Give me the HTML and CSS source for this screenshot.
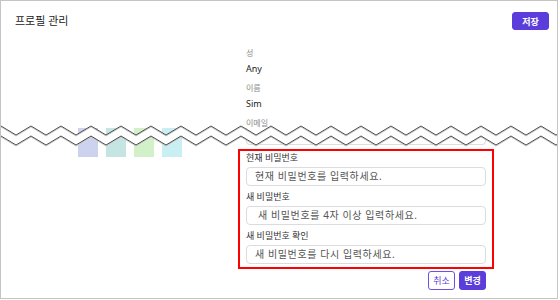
FILE: index.html
```html
<!DOCTYPE html>
<html lang="ko">
<head>
<meta charset="utf-8">
<title>프로필 관리</title>
<link rel="stylesheet" href="styles.css">
</head>
<body>
<div class="frame">
  <section class="top">
    <header class="header">
      <h1 class="title">프로필 관리</h1>
      <button class="btn btn-primary btn-save">저장</button>
    </header>
    <div class="fields">
      <div class="field">
        <div class="field-label">성</div>
        <div class="field-value">Any</div>
      </div>
      <div class="field">
        <div class="field-label">이름</div>
        <div class="field-value">Sim</div>
      </div>
      <div class="field">
        <div class="field-label">이메일</div>
      </div>
    </div>
  </section>

  <section class="bottom">
    <div class="swatches">
      <span class="swatch sw1"></span>
      <span class="swatch sw2"></span>
      <span class="swatch sw3"></span>
      <span class="swatch sw4"></span>
    </div>
    <div class="form-col">
      <div class="remnant"></div>
      <div class="highlight">
        <div class="pw-label">현재 비밀번호</div>
        <div class="pw-input">현재 비밀번호를 입력하세요.</div>
        <div class="pw-label">새 비밀번호</div>
        <div class="pw-input pw-input-wide">새 비밀번호를 4자 이상 입력하세요.</div>
        <div class="pw-label">새 비밀번호 확인</div>
        <div class="pw-input">새 비밀번호를 다시 입력하세요.</div>
      </div>
      <div class="actions">
        <button class="btn btn-outline">취소</button>
        <button class="btn btn-primary">변경</button>
      </div>
    </div>
  </section>

  <svg class="tear" width="560" height="24" viewBox="0 0 560 24" aria-hidden="true">
    <polygon fill="#ffffff" points="0,2 15,11 30,2 45,11 60,2 75,11 90,2 105,11 120,2 135,11 150,2 165,11 180,2 195,11 210,2 225,11 240,2 255,11 270,2 285,11 300,2 315,11 330,2 345,11 360,2 375,11 390,2 405,11 420,2 435,11 450,2 465,11 480,2 495,11 510,2 525,11 540,2 555,11 570,2 570,12 555,21 540,12 525,21 510,12 495,21 480,12 465,21 450,12 435,21 420,12 405,21 390,12 375,21 360,12 345,21 330,12 315,21 300,12 285,21 270,12 255,21 240,12 225,21 210,12 195,21 180,12 165,21 150,12 135,21 120,12 105,21 90,12 75,21 60,12 45,21 30,12 15,21 0,12"/>
    <g fill="none">
      <polyline stroke="#c8c8c8" stroke-width="1" transform="translate(0,1)" points="0,2 15,11 30,2 45,11 60,2 75,11 90,2 105,11 120,2 135,11 150,2 165,11 180,2 195,11 210,2 225,11 240,2 255,11 270,2 285,11 300,2 315,11 330,2 345,11 360,2 375,11 390,2 405,11 420,2 435,11 450,2 465,11 480,2 495,11 510,2 525,11 540,2 555,11 570,2"/>
      <polyline stroke="#c8c8c8" stroke-width="1" transform="translate(0,1)" points="0,12 15,21 30,12 45,21 60,12 75,21 90,12 105,21 120,12 135,21 150,12 165,21 180,12 195,21 210,12 225,21 240,12 255,21 270,12 285,21 300,12 315,21 330,12 345,21 360,12 375,21 390,12 405,21 420,12 435,21 450,12 465,21 480,12 495,21 510,12 525,21 540,12 555,21 570,12"/>
      <polyline stroke="#3a3a3a" stroke-width="0.9" points="0,2 15,11 30,2 45,11 60,2 75,11 90,2 105,11 120,2 135,11 150,2 165,11 180,2 195,11 210,2 225,11 240,2 255,11 270,2 285,11 300,2 315,11 330,2 345,11 360,2 375,11 390,2 405,11 420,2 435,11 450,2 465,11 480,2 495,11 510,2 525,11 540,2 555,11 570,2"/>
      <polyline stroke="#3a3a3a" stroke-width="0.9" points="0,12 15,21 30,12 45,21 60,12 75,21 90,12 105,21 120,12 135,21 150,12 165,21 180,12 195,21 210,12 225,21 240,12 255,21 270,12 285,21 300,12 315,21 330,12 345,21 360,12 375,21 390,12 405,21 420,12 435,21 450,12 465,21 480,12 495,21 510,12 525,21 540,12 555,21 570,12"/>
    </g>
  </svg>
</div>
</body>
</html>
```

FILE: styles.css
```css
* { box-sizing: border-box; }

html, body {
  margin: 0;
  padding: 0;
  background: #ffffff;
}

body {
  font-family: "Noto Sans", "Noto Sans CJK KR", sans-serif;
  color: #222222;
}

.frame {
  position: relative;
  width: 558px;
  height: 299px;
  border: 1px solid #c4c4c4;
  overflow: hidden;
  background: #ffffff;
}

.top {
  height: 127px;
  overflow: hidden;
}

.header {
  display: flex;
  justify-content: space-between;
  align-items: center;
  padding: 11px 8px 0 14px;
}

.title {
  margin: 0;
  font-size: 11px;
  font-weight: 400;
  line-height: 18px;
  color: #222222;
}

.btn {
  font-family: "Noto Sans", "Noto Sans CJK KR", sans-serif;
  font-size: 9px;
  line-height: 1;
  height: 19px;
  width: 27px;
  padding: 0;
  border-radius: 3px;
  cursor: pointer;
}

.btn-primary {
  background: #5b3ddb;
  border: 1px solid #5b3ddb;
  color: #ffffff;
  font-weight: 700;
}

.btn-save {
  width: 37px;
  height: 18px;
}

.btn-outline {
  background: #ffffff;
  border: 1px solid #6e52df;
  color: #5b3ddb;
}

.fields {
  margin: 18px 0 0 245px;
  width: 240px;
  display: flex;
  flex-direction: column;
  gap: 9px;
}

.field {
  display: flex;
  flex-direction: column;
  gap: 6px;
}

.field-label {
  font-size: 8px;
  line-height: 10px;
  color: #8a8a8a;
}

.field-value {
  font-size: 9px;
  line-height: 10px;
  color: #222222;
}

.bottom {
  display: flex;
}

.swatches {
  width: 245px;
  padding-left: 77px;
  display: flex;
  gap: 8px;
  align-items: flex-start;
}

.swatch {
  display: block;
  width: 20px;
  height: 29px;
}

.sw1 { background: #cdd3ee; }
.sw2 { background: #c5e5e3; }
.sw3 { background: #d2f1c8; }
.sw4 { background: #c9eff2; }

.form-col {
  width: 240px;
}

.remnant {
  height: 17px;
  border: 1px solid #dddddd;
  border-top: none;
  border-radius: 0 0 4px 4px;
}

.highlight {
  margin: 4px -8px 0;
  border: 2px solid #ff0000;
  padding: 1px 6px 3px;
}

.pw-label {
  font-size: 9px;
  line-height: 12px;
  color: #333333;
  margin-top: 5px;
}

.pw-label:first-child {
  margin-top: 0;
}

.pw-input {
  margin-top: 3px;
  height: 19px;
  border: 1px solid #dcdcdc;
  border-radius: 4px;
  padding: 0 8px;
  font-size: 10px;
  line-height: 17px;
  letter-spacing: 0.6px;
  color: #555555;
  white-space: nowrap;
  overflow: hidden;
}

.pw-input-wide {
  padding-left: 11px;
}

.actions {
  margin-top: 2px;
  display: flex;
  justify-content: flex-end;
  gap: 4px;
}

.tear {
  position: absolute;
  left: 0;
  top: 123px;
  display: block;
}
```
